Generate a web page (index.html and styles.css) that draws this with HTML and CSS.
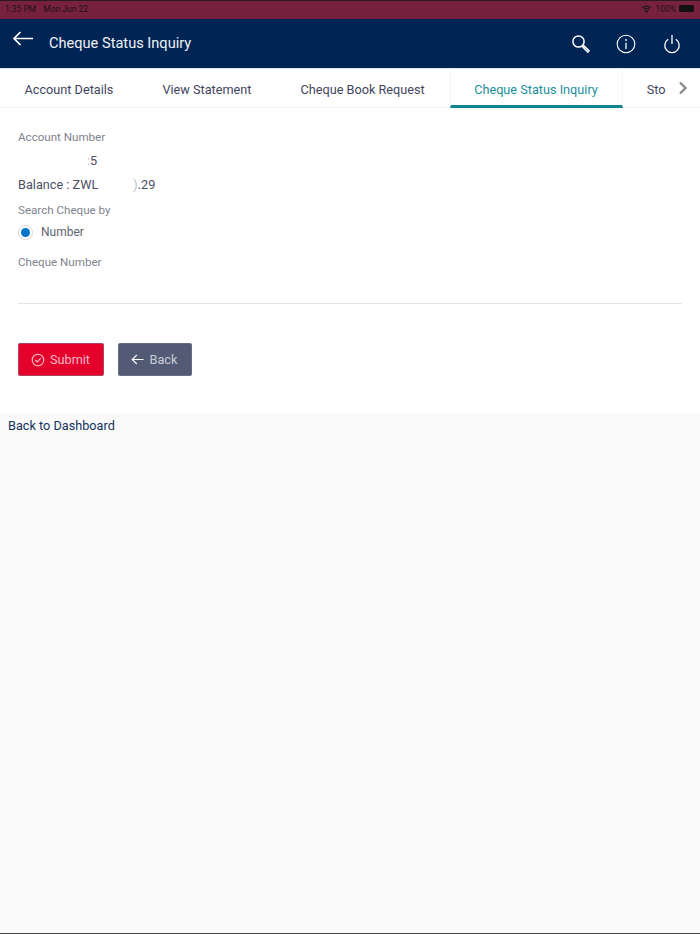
FILE: index.html
```html
<!DOCTYPE html>
<html lang="en">
<head>
<meta charset="utf-8">
<title>Cheque Status Inquiry</title>
<link rel="stylesheet" href="styles.css">
</head>
<body>
<div class="status">
  <div class="status-left"><span>1:35 PM</span><span>Mon Jun 22</span></div>
  <div class="status-right">
    <svg class="wifi" width="11" height="8" viewBox="0 0 11 8"><path d="M5.5 8 3.7 5.9a2.6 2.6 0 0 1 3.6 0Z" fill="#1a1a1a"/><path d="M2.6 4.7a4.2 4.2 0 0 1 5.8 0M1 2.9a6.5 6.5 0 0 1 9 0" fill="none" stroke="#1a1a1a" stroke-width="1.2"/></svg>
    <span>100%</span>
    <span class="battery"></span>
  </div>
</div>
<header class="topbar">
  <svg class="back-arrow" width="22" height="16" viewBox="0 0 22 16"><path d="M21 7.5H2M8.5 1 2 7.5 8.5 14" fill="none" stroke="#fff" stroke-width="1.7"/></svg>
  <h1 class="title">Cheque Status Inquiry</h1>
  <div class="actions">
    <svg width="20" height="20" viewBox="0 0 20 20"><circle cx="7.5" cy="7.5" r="5.6" fill="none" stroke="#fff" stroke-width="1.5"/><path d="M11.8 11.8 18 18" stroke="#fff" stroke-width="3.2"/><path d="M13.5 13.5 17.7 17.7" stroke="#8ea0bb" stroke-width="1"/></svg>
    <svg width="20" height="20" viewBox="0 0 20 20"><circle cx="10" cy="10" r="8.8" fill="none" stroke="#fff" stroke-width="1.1"/><path d="M10 8.8V15" stroke="#fff" stroke-width="1.3"/><circle cx="10" cy="6" r=".9" fill="#fff"/></svg>
    <svg class="power" width="18" height="20" viewBox="0 0 18 20"><path d="M5.2 5.3a7.2 7.2 0 1 0 7.6 0" fill="none" stroke="#fff" stroke-width="1.3"/><path d="M9 1v9" stroke="#fff" stroke-width="1.3"/></svg>
  </div>
</header>
<nav class="tabs">
  <a class="tab">Account Details</a>
  <a class="tab">View Statement</a>
  <a class="tab">Cheque Book Request</a>
  <a class="tab active">Cheque Status Inquiry</a>
  <a class="tab last">Sto</a>
  <svg class="chev" width="10" height="14" viewBox="0 0 10 14"><path d="M2 1.5 7.5 7 2 12.5" fill="none" stroke="#8c8c8c" stroke-width="2.4"/></svg>
</nav>
<main class="content">
  <div class="label first">Account Number</div>
  <div class="value acct"><span class="faint">:</span>5</div>
  <div class="value balance">Balance : ZWL<span class="tail"><span class="faint">)</span>.29</span></div>
  <div class="label search">Search Cheque by</div>
  <label class="radio-row"><span class="radio"></span><span>Number</span></label>
  <div class="label cheque">Cheque Number</div>
  <div class="input-line"></div>
  <div class="buttons">
    <button class="btn submit">
      <svg width="14" height="14" viewBox="0 0 14 14"><circle cx="7" cy="7" r="5.8" fill="none" stroke="#f7c3cf" stroke-width="1.1"/><path d="M4.3 7 6.3 9 9.8 5.2" fill="none" stroke="#f7c3cf" stroke-width="1.1"/></svg>
      Submit
    </button>
    <button class="btn back">
      <svg width="13" height="11" viewBox="0 0 13 11"><path d="M12.5 5.5H1.5M5.8 1 1.2 5.5 5.8 10" fill="none" stroke="#fff" stroke-width="1.1"/></svg>
      Back
    </button>
  </div>
</main>
<footer class="footer"><a class="dash">Back to Dashboard</a></footer>
</body>
</html>
```
FILE: styles.css
```css
* { box-sizing: border-box; }
html, body { margin: 0; height: 934px; overflow: hidden; }
body {
  display: flex;
  flex-direction: column;
  font-family: Roboto, "Liberation Sans", sans-serif;
  background: #fafafa;
  border-bottom: 1px solid #444;
}
.status {
  height: 19px;
  flex: none;
  background: #78213e;
  border-top: 1px solid #2a1a20;
  display: flex;
  justify-content: space-between;
  align-items: center;
  padding: 0 6px 3px 5px;
  font-size: 8.5px;
  color: #1d1216;
}
.status-left { display: flex; gap: 7px; }
.status-right { display: flex; align-items: center; gap: 3px; }
.battery {
  width: 15px;
  height: 7px;
  background: #111;
  border-radius: 1.5px;
}
.topbar {
  height: 49px;
  flex: none;
  background: #002554;
  display: flex;
  align-items: center;
  color: #fff;
  position: relative;
}
.back-arrow { margin: -10px 0 0 12px; }
.title {
  margin: -2px 0 0 15px;
  font-size: 14.6px;
  font-weight: 400;
  color: #eef1f6;
}
.actions {
  margin-left: auto;
  margin-right: 19px;
  display: flex;
  align-items: center;
  gap: 25px;
}
.power { margin-left: 2px; }
.tabs {
  height: 40px;
  flex: none;
  background: #fff;
  display: flex;
  position: relative;
  overflow: hidden;
  box-shadow: inset 0 -1px 0 #f2f2f2, inset 0 1px 0 #e3e8ee;
}
.tab {
  flex: none;
  padding: 0 24.5px;
  font-size: 12.7px;
  line-height: 43px;
  color: #3f4560;
  white-space: nowrap;
}
.tab.active {
  color: #1b8f9c;
  border-bottom: 3px solid #12838f;
  border-left: 1px solid #eef6f6;
  border-right: 1px solid #eef6f6;
  width: 173px;
  margin-left: 1px;
  margin-right: -1px;
  padding: 0 23px;
}
.chev { position: absolute; right: 12px; top: 13px; }
.content {
  height: 305px;
  flex: none;
  background: #fff;
  padding: 0 18px;
  font-size: 12px;
}
.label { color: #80838f; font-size: 11.6px; line-height: 14px; }
.label.first { padding-top: 22px; height: 36px; }
.value { color: #4b4f66; font-size: 12.7px; line-height: 16px; }
.faint { color: #b9bcc6; }
.acct { padding: 9px 0 0 69px; height: 25px; }
.balance { padding-top: 8px; height: 24px; }
.tail { margin-left: 35px; }
.search { margin-top: 10px; }
.radio-row {
  display: flex;
  align-items: center;
  gap: 8px;
  margin-top: 7px;
  color: #60636f;
  font-size: 12px;
  height: 16px;
}
.radio {
  width: 15px;
  height: 15px;
  border-radius: 50%;
  border: 1px solid #d5d8dc;
  background: #fff;
  display: flex;
  align-items: center;
  justify-content: center;
}
.radio::before {
  content: "";
  width: 9px;
  height: 9px;
  border-radius: 50%;
  background: #0076c8;
}
.cheque { margin-top: 15px; }
.input-line {
  height: 1px;
  margin-top: 34px;
  background: #e4e4e4;
}
.buttons { display: flex; gap: 14px; margin-top: 39px; }
.btn {
  height: 33px;
  border-radius: 2px;
  border: 1px solid rgba(120,130,150,.5);
  display: flex;
  align-items: center;
  justify-content: center;
  gap: 5px;
  font: 400 12.7px Roboto, "Liberation Sans", sans-serif;
  padding: 0;
}
.submit { width: 86px; padding-right: 1px; background: #e4002b; color: #f8b9c6; }
.back { width: 74px; padding-right: 2px; background: #535a75; color: #c9ccd6; gap: 6px; }
.footer {
  flex: 1;
  background: #fafafa;
  padding: 2px 8px;
}
.dash { font-size: 12.7px; line-height: 16px; color: #13325f; }
```
